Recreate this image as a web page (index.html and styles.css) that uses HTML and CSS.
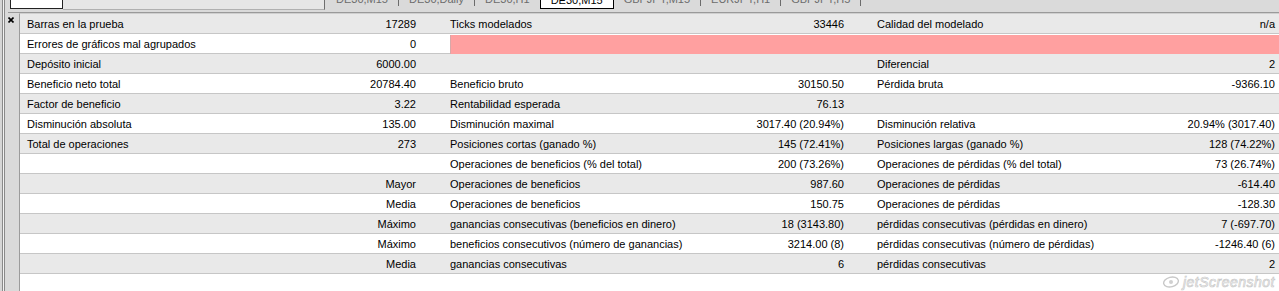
FILE: index.html
```html
<!DOCTYPE html>
<html lang="es">
<head>
<meta charset="utf-8">
<title>Informe</title>
<link rel="stylesheet" href="styles.css">
</head>
<body>
<div class="app">
  <div class="frame"></div>
  <div class="main">
    <div class="tabstrip">
      <div class="inputbox"></div>
      <div class="graybox"></div>
      <div class="tabs">
        <span class="tab">DE30,M15</span><span class="sep"></span>
        <span class="tab">DE30,Daily</span><span class="sep"></span>
        <span class="tab">DE30,H1</span>
        <span class="tab active">DE30,M15</span>
        <span class="tab">GBPJPY,M15</span><span class="sep"></span>
        <span class="tab">EURJPY,H1</span><span class="sep"></span>
        <span class="tab">GBPJPY,H5</span><span class="sep"></span>
      </div>
    </div>
    <div class="body">
      <div class="side">
        <svg class="close" width="6" height="6" viewBox="0 0 6 6"><path d="M0.5 0.5L5.5 5.5M5.5 0.5L0.5 5.5" stroke="#000" stroke-width="1.6"/></svg>
      </div>
      <div class="report">
        <div class="row alt"><span class="l">Barras en la prueba</span><span class="v">17289</span><span class="l2">Ticks modelados</span><span class="v">33446</span><span class="l3">Calidad del modelado</span><span class="v">n/a</span></div>
        <div class="row"><span class="l">Errores de gráficos mal agrupados</span><span class="v">0</span><span class="bar"></span></div>
        <div class="row alt"><span class="l">Depósito inicial</span><span class="v">6000.00</span><span class="l2"></span><span class="v"></span><span class="l3">Diferencial</span><span class="v">2</span></div>
        <div class="row"><span class="l">Beneficio neto total</span><span class="v">20784.40</span><span class="l2">Beneficio bruto</span><span class="v">30150.50</span><span class="l3">Pérdida bruta</span><span class="v">-9366.10</span></div>
        <div class="row alt"><span class="l">Factor de beneficio</span><span class="v">3.22</span><span class="l2">Rentabilidad esperada</span><span class="v">76.13</span><span class="l3"></span><span class="v"></span></div>
        <div class="row"><span class="l">Disminución absoluta</span><span class="v">135.00</span><span class="l2">Disminución maximal</span><span class="v">3017.40 (20.94%)</span><span class="l3">Disminución relativa</span><span class="v">20.94% (3017.40)</span></div>
        <div class="row alt"><span class="l">Total de operaciones</span><span class="v">273</span><span class="l2">Posiciones cortas (ganado %)</span><span class="v">145 (72.41%)</span><span class="l3">Posiciones largas (ganado %)</span><span class="v">128 (74.22%)</span></div>
        <div class="row"><span class="l"></span><span class="v"></span><span class="l2">Operaciones de beneficios (% del total)</span><span class="v">200 (73.26%)</span><span class="l3">Operaciones de pérdidas (% del total)</span><span class="v">73 (26.74%)</span></div>
        <div class="row alt"><span class="l"></span><span class="v">Mayor</span><span class="l2">Operaciones de beneficios</span><span class="v">987.60</span><span class="l3">Operaciones de pérdidas</span><span class="v">-614.40</span></div>
        <div class="row"><span class="l"></span><span class="v">Media</span><span class="l2">Operaciones de beneficios</span><span class="v">150.75</span><span class="l3">Operaciones de pérdidas</span><span class="v">-128.30</span></div>
        <div class="row alt"><span class="l"></span><span class="v">Máximo</span><span class="l2">ganancias consecutivas (beneficios en dinero)</span><span class="v">18 (3143.80)</span><span class="l3">pérdidas consecutivas (pérdidas en dinero)</span><span class="v">7 (-697.70)</span></div>
        <div class="row"><span class="l"></span><span class="v">Máximo</span><span class="l2">beneficios consecutivos (número de ganancias)</span><span class="v">3214.00 (8)</span><span class="l3">pérdidas consecutivas (número de pérdidas)</span><span class="v">-1246.40 (6)</span></div>
        <div class="row alt"><span class="l"></span><span class="v">Media</span><span class="l2">ganancias consecutivas</span><span class="v">6</span><span class="l3">pérdidas consecutivas</span><span class="v">2</span></div>
        <div class="watermark">
          <svg width="18" height="12" viewBox="0 0 18 12"><ellipse cx="9" cy="6" rx="7.5" ry="4.8" fill="none" stroke="#c8c8c8" stroke-width="1.4" transform="rotate(-15 9 6)"/><circle cx="9" cy="6" r="2" fill="#d0d0d0"/></svg>
          <span class="wm-text">jetScreenshot</span>
        </div>
      </div>
    </div>
  </div>
</div>
</body>
</html>
```

FILE: styles.css
```css
html, body {
  margin: 0;
  padding: 0;
}
body {
  width: 1279px;
  height: 291px;
  overflow: hidden;
  background: #dadada;
  font-family: "Liberation Sans", Arial, sans-serif;
  font-size: 11px;
  color: #000;
}
.app {
  display: flex;
  height: 291px;
}
.frame {
  width: 8px;
  flex: none;
  background: linear-gradient(to right, #d6d6d6 0 2px, #8a8a8a 2px 3px, #f2f2f2 3px 4px, #8a8a8a 4px 5px, #dadada 5px 8px);
}
.main {
  flex: 1;
  display: flex;
  flex-direction: column;
  min-width: 0;
}
.tabstrip {
  height: 12px;
  flex: none;
  display: flex;
  overflow: hidden;
  background: #dadada;
}
.inputbox {
  margin-left: 2px;
  width: 51px;
  height: 8px;
  background: #fff;
  border: 1px solid #222;
  border-top: none;
}
.graybox {
  width: 261px;
  height: 9px;
  background: #e6e6e6;
  border-bottom: 1px solid #b0b0b0;
  border-right: 1px solid #6e6e6e;
}
.tabs {
  display: flex;
  align-items: flex-start;
  padding-left: 11px;
}
.tab {
  display: block;
  height: 12px;
  line-height: 12px;
  margin-top: -7px;
  padding: 0 10px;
  color: #6c6c6c;
  white-space: nowrap;
}
.tabs .tab:first-child {
  padding-left: 0;
}
.tab.active {
  margin: 0;
  padding: 0 10px;
  height: 8px;
  line-height: 0px;
  background: #fff;
  border: 1px solid #000;
  border-top: none;
  color: #000;
}
.sep {
  display: block;
  width: 1px;
  height: 6px;
  background: #6c6c6c;
}
.body {
  flex: 1;
  display: flex;
  border-top: 1px solid #9a9a9a;
}
.side {
  width: 11px;
  flex: none;
}
.close {
  display: block;
  margin-top: 4px;
  margin-left: 0;
}
.report {
  flex: 1;
  position: relative;
  background: #fff;
  border-left: 1px solid #9c9c9c;
  border-top: 1px solid #cfcfcf;
}
.row {
  display: grid;
  grid-template-columns: 230px 170px 260px 168px 252px 1fr;
  height: 20px;
  box-sizing: border-box;
  border-bottom: 1px solid #c6c6c6;
  align-items: center;
  line-height: 19px;
  padding-top: 1px;
  white-space: nowrap;
}
.row.alt {
  background: #e9e9e9;
}
.l {
  padding-left: 7px;
}
.l2 {
  padding-left: 30px;
}
.l3 {
  padding-left: 29px;
}
.v {
  text-align: right;
  padding-right: 4px;
}
.bar {
  grid-column: 3 / 7;
  margin-left: 30px;
  align-self: stretch;
  background: #ffa0a0;
  border-left: 1px solid #d8a8a8;
}
.watermark {
  position: absolute;
  right: 4px;
  bottom: 1px;
  display: flex;
  align-items: center;
  gap: 3px;
}
.wm-text {
  font-size: 14px;
  font-style: italic;
  color: #fff;
  -webkit-text-stroke: 0.7px #c8c8c8;
  letter-spacing: 0.5px;
}
```
